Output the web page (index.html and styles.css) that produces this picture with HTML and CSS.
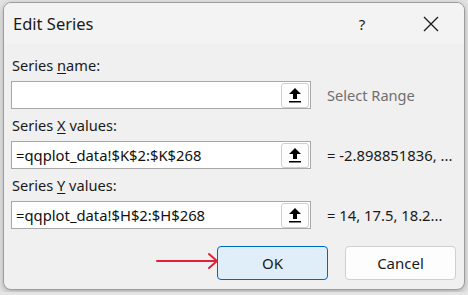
FILE: index.html
```html
<!DOCTYPE html>
<html>
<head>
<meta charset="UTF-8">
<title>Edit Series</title>
<link rel="stylesheet" href="styles.css">
</head>
<body>

<div class="dialog">
  <div class="titlebar">
    <span class="title">Edit Series</span>
    <span class="help">?</span>
    <span class="close">
      <svg width="16" height="16" viewBox="0 0 16 16"><path d="M1 1L15 15M15 1L1 15" stroke="#1a1a1a" stroke-width="1.3" fill="none"/></svg>
    </span>
  </div>

  <div class="content">
    <div class="field">
      <label class="label">Series <u>n</u>ame:</label>
      <div class="row">
        <div class="input"><span class="input-text"></span><span class="range-btn"><svg width="12" height="15" viewBox="0 0 12 15"><path d="M6 0L12 6H8V11H4V6H0Z" fill="#000"/><rect x="0" y="13" width="12" height="1.5" fill="#000"/></svg></span></div>
        <span class="hint">Select Range</span>
      </div>
    </div>
    <div class="field">
      <label class="label">Series <u>X</u> values:</label>
      <div class="row">
        <div class="input"><span class="input-text">=qqplot_data!$K$2:$K$268</span><span class="range-btn"><svg width="12" height="15" viewBox="0 0 12 15"><path d="M6 0L12 6H8V11H4V6H0Z" fill="#000"/><rect x="0" y="13" width="12" height="1.5" fill="#000"/></svg></span></div>
        <span class="value">= -2.898851836, ...</span>
      </div>
    </div>
    <div class="field">
      <label class="label">Series <u>Y</u> values:</label>
      <div class="row">
        <div class="input"><span class="input-text">=qqplot_data!$H$2:$H$268</span><span class="range-btn"><svg width="12" height="15" viewBox="0 0 12 15"><path d="M6 0L12 6H8V11H4V6H0Z" fill="#000"/><rect x="0" y="13" width="12" height="1.5" fill="#000"/></svg></span></div>
        <span class="value">= 14, 17.5, 18.2...</span>
      </div>
    </div>

    <div class="buttons">
      <button class="button primary">OK</button>
      <button class="button">Cancel</button>
    </div>
  </div>

  <!-- annotation arrow pointing at OK -->
  <svg class="arrow" width="64" height="18" viewBox="0 0 64 18"><path d="M1 9H61M53 2L61 9L53 16" stroke="#e3203a" stroke-width="2" fill="none" stroke-linecap="round" stroke-linejoin="round"/></svg>
</div>

</body>
</html>
```

FILE: styles.css
```css
body {
  margin: 0;
  padding: 2px 3px;
  background-color: #e4e4e4;
  font-family: "Noto Sans", "Open Sans", sans-serif;
  color: #1a1a1a;
}
.dialog {
  position: relative;
  width: 460px;
  height: 286px;
  border: 1px solid #9c9c9c;
  border-radius: 8px;
  background-color: #f0f0f0;
  overflow: hidden;
  box-shadow: 0 2px 6px rgba(0,0,0,.25);
}
.titlebar {
  display: flex;
  align-items: center;
  height: 41px;
  padding-left: 9px;
  background-color: #f3f3f3;
}
.title {
  flex: 1;
  font-size: 16.5px;
}
.help, .close {
  display: flex;
  justify-content: center;
  align-items: center;
  width: 46px;
  height: 41px;
  font-size: 15px;
}
.help {
  margin-right: 23px;
}
.close {
  margin-right: 10px;
}
.content {
  display: flex;
  flex-direction: column;
  gap: 6px;
  padding: 11px 0 0 7px;
}
.field {
  display: flex;
  flex-direction: column;
  gap: 6px;
}
.label {
  padding-left: 1px;
  height: 20px;
  line-height: 20px;
  font-size: 14.6px;
}
.label u {
  text-underline-offset: 2px;
}
.row {
  display: flex;
  align-items: center;
  gap: 16px;
}
.input {
  display: flex;
  align-items: center;
  box-sizing: border-box;
  width: 300px;
  height: 28px;
  padding: 0 1px 0 4px;
  border: 1px solid #a8a8a8;
  background-color: white;
}
.input-text {
  flex: 1;
  font-size: 14.8px;
  color: #111;
}
.range-btn {
  display: flex;
  justify-content: center;
  align-items: center;
  box-sizing: border-box;
  width: 28px;
  height: 25px;
  border: 1px solid #cfcfcf;
  border-radius: 3px;
  background-color: #fdfdfd;
}
.hint {
  font-size: 14.6px;
  color: #6f6f6f;
}
.value {
  font-size: 14.8px;
  color: #1a1a1a;
}
.buttons {
  display: flex;
  justify-content: flex-end;
  gap: 17px;
  margin-top: 11px;
  padding-right: 8px;
}
.button {
  box-sizing: border-box;
  width: 111px;
  height: 34px;
  border: 1px solid #d0d0d0;
  border-radius: 4px;
  background-color: #fdfdfd;
  font-family: inherit;
  font-size: 15px;
  color: #1a1a1a;
}
.button.primary {
  border-color: #0067c0;
  background-color: #e0eef9;
}
.arrow {
  position: absolute;
  left: 152px;
  top: 249px;
}
```
